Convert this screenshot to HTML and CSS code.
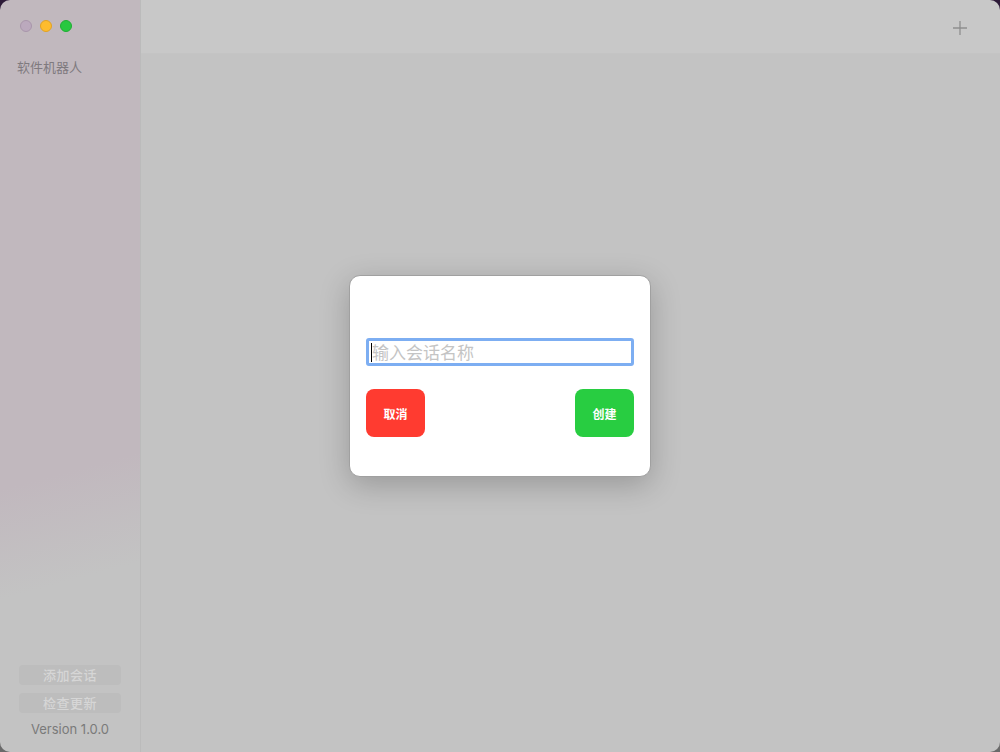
FILE: index.html
```html
<!DOCTYPE html>
<html lang="zh">
<head>
<meta charset="utf-8">
<link rel="stylesheet" href="styles.css">
</head>
<body>
<div class="window">
  <aside class="sidebar">
    <div class="lights">
      <span class="light close"></span>
      <span class="light min"></span>
      <span class="light max"></span>
    </div>
    <div class="title">软件机器人</div>
    <div class="spacer"></div>
    <div class="side-actions">
      <button class="side-btn">添加会话</button>
      <button class="side-btn">检查更新</button>
      <div class="version">Version 1.0.0</div>
    </div>
  </aside>
  <main class="main">
    <header class="topbar">
      <svg class="plus" width="16" height="16" viewBox="0 0 16 16"><path d="M8 1v14M1 8h14" stroke="#8e8e8e" stroke-width="1.3"/></svg>
    </header>
    <div class="content"></div>
  </main>
  <div class="overlay">
    <div class="dialog">
      <div class="field"><span class="caret"></span><span class="placeholder">输入会话名称</span></div>
      <div class="actions">
        <button class="btn cancel">取消</button>
        <button class="btn create">创建</button>
      </div>
    </div>
  </div>
</div>
</body>
</html>
```
FILE: styles.css
```css
html, body {
  margin: 0;
  padding: 0;
  width: 1000px;
  height: 752px;
  background: linear-gradient(180deg, #2d1a38 0%, #6a6a6a 100%);
  overflow: hidden;
}
.window {
  position: relative;
  width: 1000px;
  height: 752px;
  border-radius: 10px;
  overflow: hidden;
  display: flex;
  font-family: "Noto Sans CJK SC", "Noto Sans", sans-serif;
}
.sidebar {
  width: 140px;
  flex: none;
  display: flex;
  flex-direction: column;
  background: linear-gradient(165deg, #c1b8be 0%, #c1b8be 62%, #c3c3c3 76%, #c3c3c3 100%);
  border-right: 1px solid #bbbbbb;
}
.lights {
  display: flex;
  gap: 8px;
  padding: 20px 0 0 20px;
}
.light {
  width: 10px;
  height: 10px;
  border-radius: 50%;
  border: 1px solid transparent;
}
.light.close { background: #bba9bd; border-color: #a996ab; }
.light.min { background: #febc2e; border-color: #e0a225; }
.light.max { background: #28c840; border-color: #1fae33; }
.title {
  margin: 26px 0 0 17px;
  font-size: 13px;
  line-height: 18px;
  color: #7f7a7e;
}
.spacer { flex: 1; }
.side-actions {
  display: flex;
  flex-direction: column;
  align-items: center;
  gap: 8px;
  padding-bottom: 15px;
}
.side-btn {
  width: 102px;
  height: 20px;
  border: none;
  border-radius: 4px;
  background: #bdbdbd;
  color: #d6d6d6;
  font-family: "Noto Sans CJK SC", sans-serif;
  font-size: 13px;
  font-weight: 500;
  line-height: 20px;
  padding: 0;
  letter-spacing: 0.5px;
}
.version {
  font-family: "Inter", "Noto Sans", sans-serif;
  font-size: 13px;
  color: #7a7a7a;
  line-height: 16px;
}
.main {
  flex: 1;
  display: flex;
  flex-direction: column;
}
.topbar {
  height: 51px;
  background: #c8c8c8;
  border-bottom: 1px solid #c4c4c4;
  display: flex;
  justify-content: flex-end;
  align-items: center;
  padding-right: 32px;
  padding-top: 2px;
  box-sizing: content-box;
}
.plus { display: block; }
.content {
  flex: 1;
  background: #c3c3c3;
}
.overlay {
  position: absolute;
  inset: 0;
  display: flex;
  align-items: center;
  justify-content: center;
}
.dialog {
  width: 302px;
  height: 202px;
  box-sizing: border-box;
  background: #ffffff;
  border-radius: 11px;
  border: 1px solid #a0a0a0;
  box-shadow: 0 8px 30px rgba(0,0,0,0.22);
  padding: 62px 16px 0 16px;
  display: flex;
  flex-direction: column;
}
.field {
  height: 28px;
  box-sizing: border-box;
  border: 3px solid #7daef2;
  border-radius: 3px;
  display: flex;
  align-items: center;
  padding-left: 2px;
}
.caret {
  width: 1px;
  height: 19px;
  background: #000;
  flex: none;
}
.placeholder {
  font-size: 17px;
  color: #c4c4c4;
  line-height: 20px;
}
.actions {
  display: flex;
  justify-content: space-between;
  margin-top: 23px;
}
.btn {
  width: 59px;
  height: 48px;
  border: none;
  border-radius: 8px;
  color: #ffffff;
  font-family: "Noto Sans CJK SC", sans-serif;
  font-size: 12px;
  font-weight: 700;
  padding: 0;
}
.btn.cancel { background: #ff3b30; }
.btn.create { background: #28cd41; }
```
